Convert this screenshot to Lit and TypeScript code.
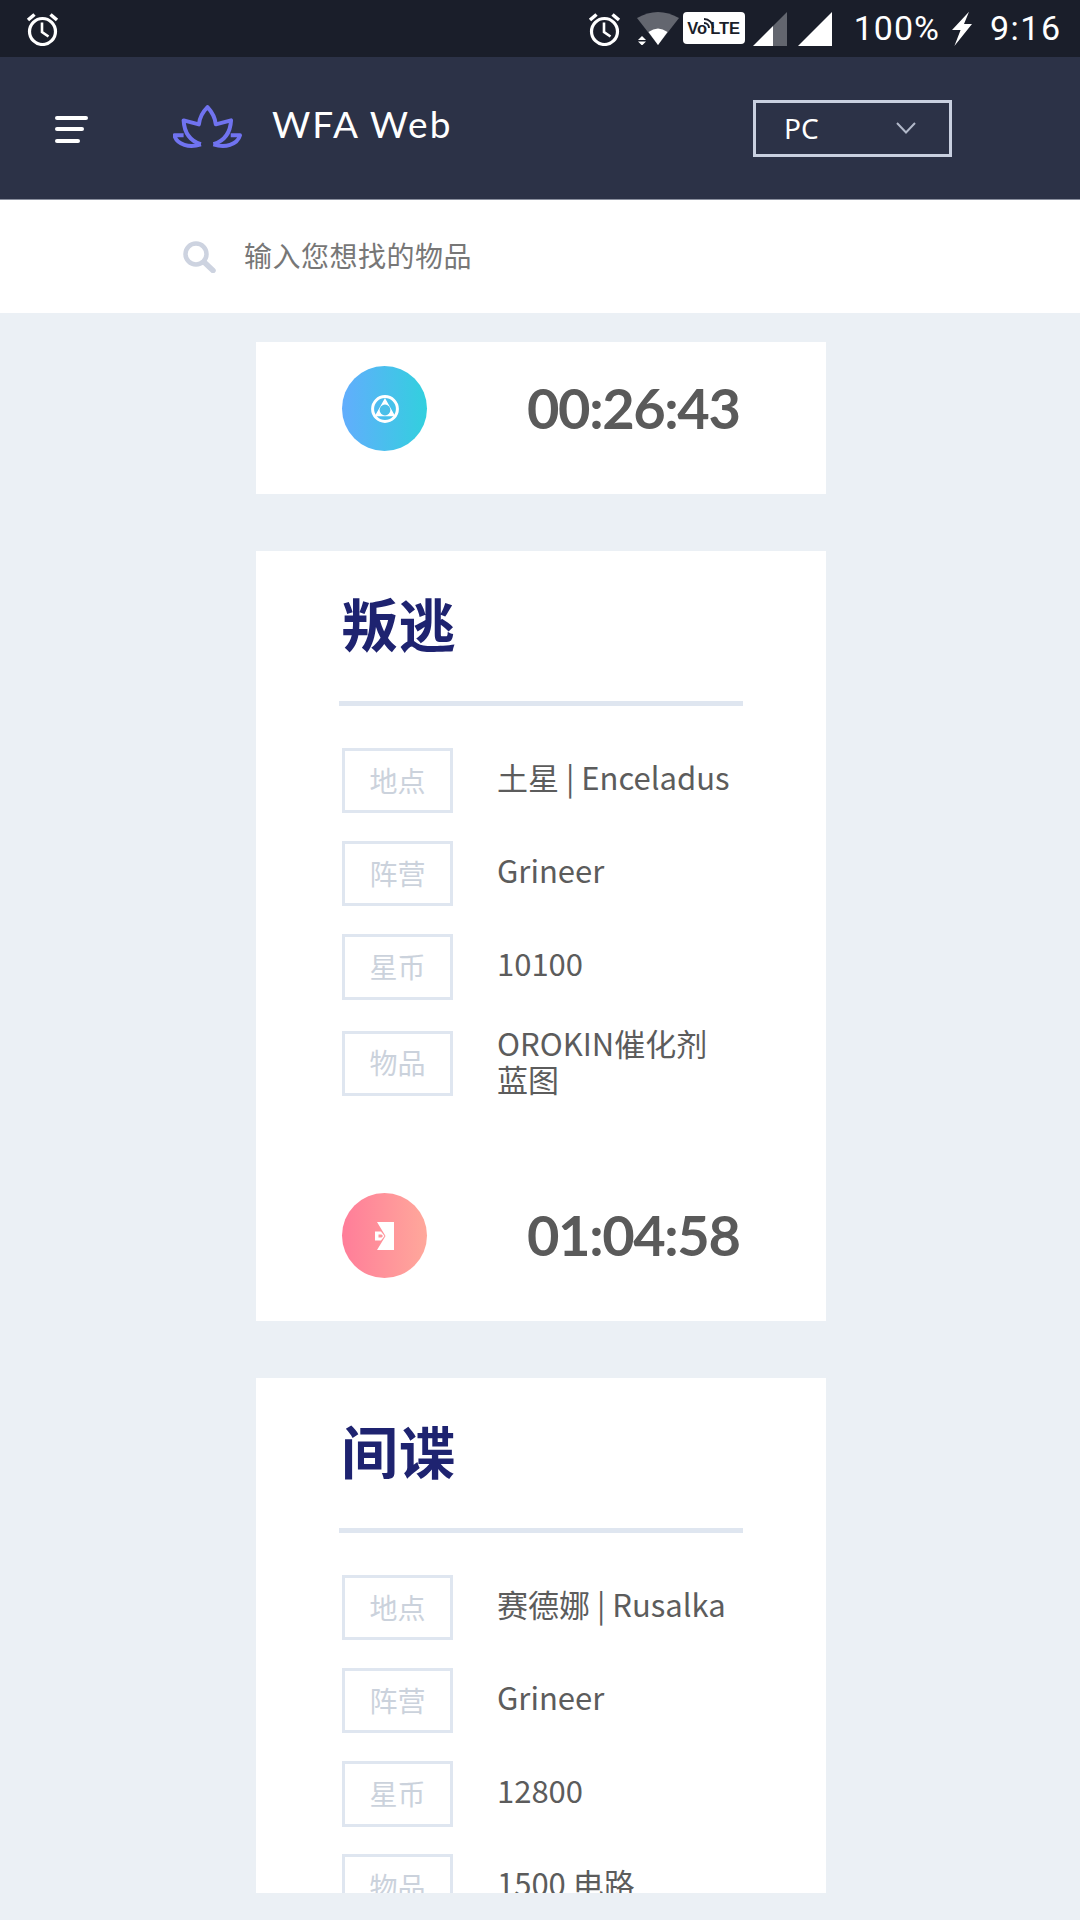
import { LitElement, html, css } from "lit";
import { customElement } from "lit/decorators.js";

const alarm = html`<svg class="alarm" viewBox="0 0 33 34" width="33" height="34"><g fill="none" stroke="#fff" stroke-width="3.2"><circle cx="16.5" cy="19.5" r="13"/><polyline points="16,10.5 16,20 22.5,24.5" stroke-width="2.6"/><path d="M2 8 8.5 2.5M31 8 24.5 2.5" stroke-width="3.6"/></g></svg>`;

interface Row { k: string; v: string; wrap?: boolean }
interface Mission { title: string; rows: Row[]; time: string }

const missions: Mission[] = [
  {
    title: "叛逃",
    time: "01:04:58",
    rows: [
      { k: "地点", v: "土星 | Enceladus" },
      { k: "阵营", v: "Grineer" },
      { k: "星币", v: "10100" },
      { k: "物品", v: "OROKIN催化剂蓝图", wrap: true },
    ],
  },
  {
    title: "间谍",
    time: "",
    rows: [
      { k: "地点", v: "赛德娜 | Rusalka" },
      { k: "阵营", v: "Grineer" },
      { k: "星币", v: "12800" },
      { k: "物品", v: "1500 电路" },
    ],
  },
];

const blueIcon = html`<svg viewBox="0 0 30 30" width="30" height="30"><circle cx="15" cy="15" r="12.4" fill="none" stroke="#fff" stroke-width="3"/><path d="M15 5.5 24 21.5H6Z" fill="#fff" stroke="#fff" stroke-width="1.5"/><circle cx="15" cy="16" r="5.4" fill="#4bbfe9"/></svg>`;

const doorIcon = html`<svg viewBox="0 0 20 28" width="20" height="28"><path d="M2 0H19V28H2L10.5 14Z" fill="#fff"/><path d="M0 9.5H6L9.5 14 6 18.5H0Z" fill="#fff"/><path d="M3.5 12.5H6.5L8 14 6.5 15.5H3.5Z" fill="#ff949b"/></svg>`;

@customElement("app-root")
export class AppRoot extends LitElement {
  static styles = css`
    :host { display: block; width: 1080px; height: 1920px; overflow: hidden; background: #ebf0f5; font-family: "Noto Sans CJK SC", "Noto Sans", sans-serif; }
    .status { height: 57px; background: #1a1e2a; display: flex; align-items: center; color: #fff; box-sizing: border-box; padding: 0 18.5px 0 26px; }
    .status .alarm { flex: none; }
    .spacer { flex: 1; }
    .wifi { margin-left: 16px; margin-top: -1px; flex: none; }
    .volte { position: relative; margin-left: 4px; width: 62px; height: 32px; background: #fff; border-radius: 4px; color: #1a1e2a; font: 700 16.5px/32px "Liberation Sans", sans-serif; display: flex; justify-content: center; flex: none; margin-top: -1px; }
    .volte b { margin-left: 3px; font-weight: 700; }
    .volte svg { position: absolute; left: 19px; top: 6px; }
    .sig1 { margin-left: 8px; flex: none; }
    .sig2 { margin-left: 11px; flex: none; }
    .batt { margin-left: 22px; font: 400 34px/57px Roboto, sans-serif; letter-spacing: 1px; }
    .bolt { margin-left: 12px; flex: none; }
    .clock { margin-left: 18px; font: 400 34px/57px Roboto, sans-serif; letter-spacing: 1.5px; }

    .head { height: 142px; background: #2c3247; border-bottom: 1px solid #8a8f9e; display: flex; align-items: center; padding-left: 55px; }
    .burger { width: 33px; display: flex; flex-direction: column; gap: 7.5px; margin-top: 2px; }
    .burger i { display: block; height: 4px; border-radius: 2px; background: #fff; }
    .burger i:nth-child(2) { width: 29px; }
    .burger i:nth-child(3) { width: 25px; }
    .lotus { margin-left: 85px; flex: none; margin-top: -2px; }
    .brand { margin-left: 30px; width: 200px; font: 400 37px/44px Lato, sans-serif; color: #fff; letter-spacing: 2px; white-space: nowrap; margin-top: -8px; }
    .select { margin-left: 281px; width: 199px; height: 57px; box-sizing: border-box; border: 3px solid #c9d0e0; display: flex; align-items: center; justify-content: space-between; padding: 0 33px 0 28px; color: #fff; font-size: 28px; font-family: "Noto Sans", sans-serif; }
    .select svg { opacity: 0.85; }
    .search { height: 113px; background: #fff; display: flex; align-items: center; padding-left: 183px; }
    .search span { margin: -4px 0 0 28px; font-size: 28px; color: #777; letter-spacing: 0.5px; }

    main { height: 1580px; overflow: hidden; box-sizing: border-box; padding: 29px 0 0 2px; display: flex; flex-direction: column; align-items: center; gap: 57px; }
    .card { flex: none; width: 570px; box-sizing: border-box; background: #fff; padding: 0 0 43px 86px; }
    .card.first { padding-top: 24px; }
    .timer { display: flex; align-items: center; height: 85px; }
    .mt { margin-top: 94px; }
    .dot { flex: none; width: 85px; height: 85px; border-radius: 50%; display: flex; align-items: center; justify-content: center; }
    .blue { background: linear-gradient(90deg, #62adfd, #32d0de); }
    .pink { background: linear-gradient(90deg, #ff7d99, #ffa89b); }
    .time { margin: -2px 0 0 100px; font: 700 56px/85px "Lato", sans-serif; color: #5a5a5a; letter-spacing: -1.4px; white-space: nowrap; }
    h2 { margin: 0 0 0 -1px; padding-top: 26px; font-size: 57px; line-height: 90px; font-weight: 700; color: #1e2370; letter-spacing: 0.5px; }
    .rule { margin: 34px 0 42px -3px; width: 404px; height: 5px; background: #dfe6f0; }
    .rows { display: flex; flex-direction: column; gap: 28px; }
    .row { display: flex; align-items: center; }
    .row:nth-child(3) { margin-bottom: -1px; }
    .row:nth-child(3) .tag { height: 66px; }
    .tag { flex: none; width: 111px; height: 65px; box-sizing: border-box; border: 3px solid #dfe6f0; padding-bottom: 2px; display: flex; align-items: center; justify-content: center; font-size: 28px; color: #cbd2dc; }
    .val { margin: -4px 0 4px 44px; width: 238px; font-size: 31px; line-height: 36px; color: #5c5c5c; }
    .val.wrap { margin: -2px 0 2px 44px; }
  `;

  render() {
    return html`
      <div class="status">
        ${alarm}
        <div class="spacer"></div>
        ${alarm}
        <svg class="wifi" viewBox="0 0 42 33" width="42" height="33"><path d="M0 6Q21-6 42 6L21 33Z" fill="#63666f"/><path d="M11.5 20Q21 13 30.5 20L21 33Z" fill="#fff"/><path d="M1 28 5 24 9 28ZM1 29.5 5 33.5 9 29.5Z" fill="#fff"/></svg>
        <div class="volte"><span>Vo</span><b>LTE</b><svg viewBox="0 0 12 12" width="12" height="12"><path d="M2 5A5 5 0 0 1 7 10M2 1A9 9 0 0 1 11 10" fill="none" stroke="#1a1e2a" stroke-width="2"/></svg></div>
        <svg class="sig1" viewBox="0 0 34 34" width="34" height="34"><path d="M0 34 20 14V34Z" fill="#fff"/><path d="M20 14 34 0V34H20Z" fill="#63666f"/></svg>
        <svg class="sig2" viewBox="0 0 34 34" width="34" height="34"><path d="M0 34 34 0V34Z" fill="#fff"/></svg>
        <span class="batt">100%</span>
        <svg class="bolt" viewBox="0 0 20 35" width="20" height="35"><path d="M17 .7 0 19H8.6L2.4 35 20 13H12Z" fill="#fff"/></svg>
        <span class="clock">9:16</span>
      </div>
      <div class="head">
        <div class="burger"><i></i><i></i><i></i></div>
        <svg class="lotus" viewBox="38 42 208 135" width="69" height="45"><g fill="none" stroke="#7073f0" stroke-width="12" stroke-linejoin="round"><path d="M122 160C90 150 72 125 70 88L116 100C118 80 128 62 142 48 155 62 165 80 167 100L213 88C211 125 192 150 160 160"/><path d="M70 133H42C50 162 88 172 122 160M212 133H240C232 162 194 172 160 160"/></g></svg>
        <div class="brand">WFA Web</div>
        <div class="select"><span>PC</span><svg viewBox="0 0 20 12" width="20" height="12"><path d="M1 1 10 10.5 19 1" fill="none" stroke="#c9d0e0" stroke-width="2"/></svg></div>
      </div>
      <div class="search">
        <svg viewBox="0 0 33 32" width="33" height="32"><circle cx="13" cy="13" r="10.5" fill="none" stroke="#cdd3e0" stroke-width="4.5"/><path d="M21 21 30 29.5" stroke="#cdd3e0" stroke-width="5.5" stroke-linecap="round"/></svg>
        <span>输入您想找的物品</span>
      </div>
      <main>
        <section class="card first">
          <div class="timer"><div class="dot blue">${blueIcon}</div><div class="time">00:26:43</div></div>
        </section>
        ${missions.map(
          (m) => html`<section class="card">
            <h2>${m.title}</h2>
            <div class="rule"></div>
            <div class="rows">
              ${m.rows.map((r) => html`<div class="row"><div class="tag">${r.k}</div><div class="val ${r.wrap ? "wrap" : ""}">${r.v}</div></div>`)}
            </div>
            ${m.time ? html`<div class="timer mt"><div class="dot pink">${doorIcon}</div><div class="time">${m.time}</div></div>` : ""}
          </section>`
        )}
      </main>
    `;
  }
}
